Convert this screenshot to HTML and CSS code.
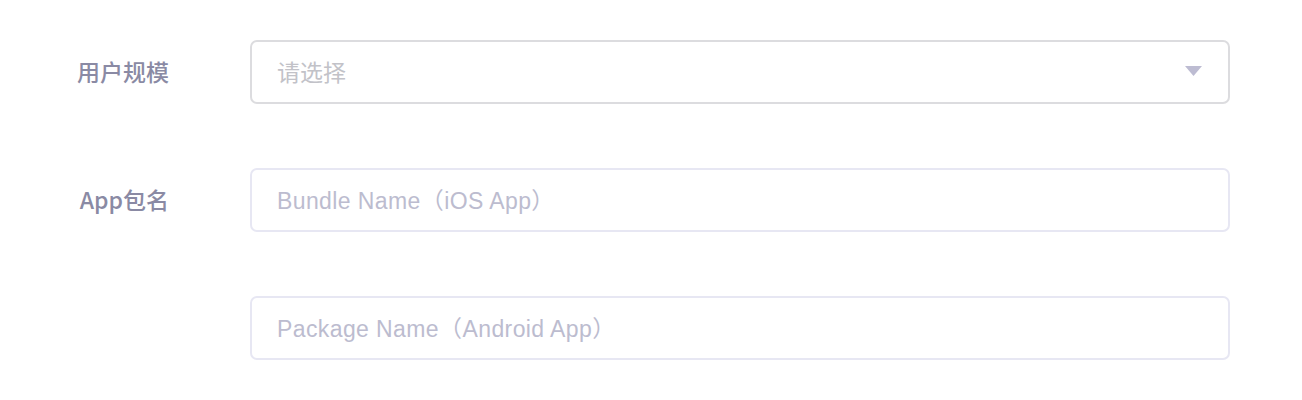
FILE: index.html
```html
<!DOCTYPE html>
<html lang="zh">
<head>
<meta charset="utf-8">
<link rel="stylesheet" href="styles.css">
</head>
<body>
<form class="form">
  <div class="row">
    <label class="label">用户规模</label>
    <div class="field select">
      <span class="placeholder">请选择</span>
      <svg class="arrow" width="17" height="10" viewBox="0 0 17 10"><path d="M0 0H17L8.5 10Z" fill="#bdbcd2"/></svg>
    </div>
  </div>
  <div class="row">
    <label class="label">App包名</label>
    <div class="field input"><span class="placeholder">Bundle Name（iOS App）</span></div>
  </div>
  <div class="row">
    <label class="label"></label>
    <div class="field input"><span class="placeholder">Package Name（Android App）</span></div>
  </div>
</form>
</body>
</html>
```
FILE: styles.css
```css
html, body {
  margin: 0;
  padding: 0;
  background: #ffffff;
}
body {
  font-family: "Liberation Sans", "Noto Sans CJK SC", sans-serif;
}
.form {
  display: flex;
  flex-direction: column;
  gap: 64px;
  padding-top: 40px;
}
.row {
  display: flex;
  align-items: center;
  gap: 81px;
}
.label {
  width: 169px;
  text-align: right;
  font-family: "Noto Sans CJK SC", sans-serif;
  font-size: 23px;
  font-weight: 500;
  color: #8a8aa4;
  padding-bottom: 2px;
}
.field {
  box-sizing: border-box;
  width: 980px;
  height: 64px;
  border-radius: 7px;
  display: flex;
  align-items: center;
  padding: 0 26px 2px 25px;
}
.select {
  border: 2px solid #dcdcdf;
  justify-content: space-between;
}
.input {
  border: 2px solid #e7e7f3;
}
.placeholder {
  font-size: 23px;
  letter-spacing: 0.4px;
  color: #bcbccf;
}
.select .placeholder {
  font-family: "Noto Sans CJK SC", sans-serif;
  letter-spacing: 0;
  color: #c2c2c8;
}
.arrow {
  display: block;
}
```
